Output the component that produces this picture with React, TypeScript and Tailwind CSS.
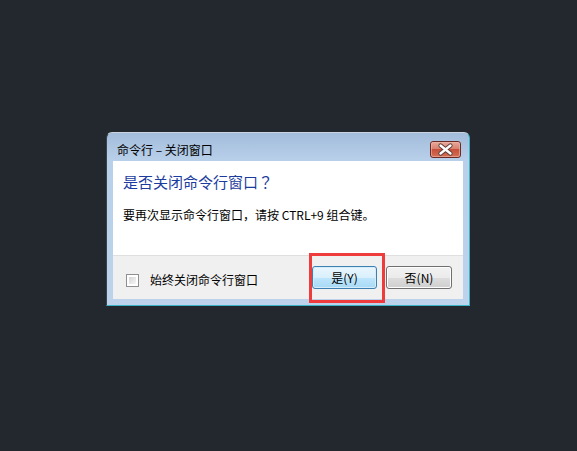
import React from "react";

const font = { fontFamily: '"Noto Sans CJK SC", "Noto Sans", sans-serif' };

function CloseIcon() {
  return (
    <svg width="31" height="17" viewBox="0 0 31 17">
      <defs>
        <linearGradient id="cg" x1="0" y1="0" x2="0" y2="1">
          <stop offset="0" stopColor="#e9ab9d" />
          <stop offset="0.45" stopColor="#d98270" />
          <stop offset="0.5" stopColor="#c8503a" />
          <stop offset="1" stopColor="#d27357" />
        </linearGradient>
      </defs>
      <rect x="0.5" y="0.5" width="30" height="16" rx="2.5" fill="url(#cg)" stroke="#6b2b25" />
      <rect x="1.5" y="1.5" width="28" height="14" rx="1.5" fill="none" stroke="#f0b8ab" strokeOpacity="0.6" />
      <path d="M10.5 4.5 L20.5 12.5 M20.5 4.5 L10.5 12.5" stroke="#5a3a36" strokeWidth="4.2" strokeLinecap="round" />
      <path d="M10.5 4.5 L20.5 12.5 M20.5 4.5 L10.5 12.5" stroke="#ffffff" strokeWidth="2.4" strokeLinecap="round" />
    </svg>
  );
}

export default function App() {
  return (
    <div className="w-[577px] h-[451px] bg-[#23282f] pt-[132px] pl-[106px]" style={font}>
      <div className="relative w-[364px] h-[174px] flex flex-col rounded-t-[6px] border border-t-[#c9d4e0] border-l-[#3b424a] border-r-[#3ab3c6] border-b-[#3ab3c6] bg-[linear-gradient(to_bottom,#a2bcda_0px,#b9d0ea_28px,#bcd3eb_100%)]">
        <div className="h-[28px] flex items-start justify-between pl-[10px] pr-[8px] pt-[8px]">
          <span className="text-[12px] leading-[14px] text-black mt-[2px]">命令行 – 关闭窗口</span>
          <CloseIcon />
        </div>
        <div className="mx-[6px] flex flex-col">
          <div className="h-[94px] bg-white pl-[10px] pt-[11px]">
            <div className="text-[15px] leading-[20px] text-[#1b3c9e]">
              是否关闭命令行窗口<span className="font-['Noto_Sans_CJK_JP',sans-serif]">？</span>
            </div>
            <div className="mt-[15px] text-[12px] leading-[16px] text-black">
              要再次显示命令行窗口<span className="font-['Noto_Sans_CJK_JP',sans-serif]">，</span>请按 CTRL+9 组合键。
            </div>
          </div>
          <div className="h-[44px] bg-[#f0f0f0] border-t border-[#dfdfdf] flex items-start justify-between pl-[13px] pr-[11px]">
            <div className="flex items-center mt-[16px]">
              <div className="w-[13px] h-[13px] border border-[#8f8f8f] bg-white p-[2px]">
                <div className="w-full h-full bg-[linear-gradient(135deg,#d4d4d4,#f6f6f6)]" />
              </div>
              <span className="ml-[11px] text-[12px] leading-[16px] text-black">始终关闭命令行窗口</span>
            </div>
            <div className="flex gap-[9px] mt-[10px]">
              <button className="w-[65px] h-[23px] rounded-[3px] border border-[#3c7fb1] bg-[linear-gradient(to_bottom,#eaf6fd_0%,#d9f0fc_50%,#bee6fd_51%,#a7d9f5_100%)] shadow-[inset_0_0_0_1px_#d6ecf9] text-[12px] leading-[14px] text-black">
                是(Y)
              </button>
              <button className="w-[66px] h-[23px] rounded-[3px] border border-[#707070] bg-[linear-gradient(to_bottom,#f2f2f2_0%,#ebebeb_50%,#dddddd_51%,#cfcfcf_100%)] shadow-[inset_0_0_0_1px_#fcfcfc] text-[12px] leading-[14px] text-black">
                否(N)
              </button>
            </div>
          </div>
        </div>
        <div className="absolute left-[202px] top-[120px] w-[76px] h-[50px] border-[3px] border-[#ef3b3b]" />
      </div>
    </div>
  );
}
